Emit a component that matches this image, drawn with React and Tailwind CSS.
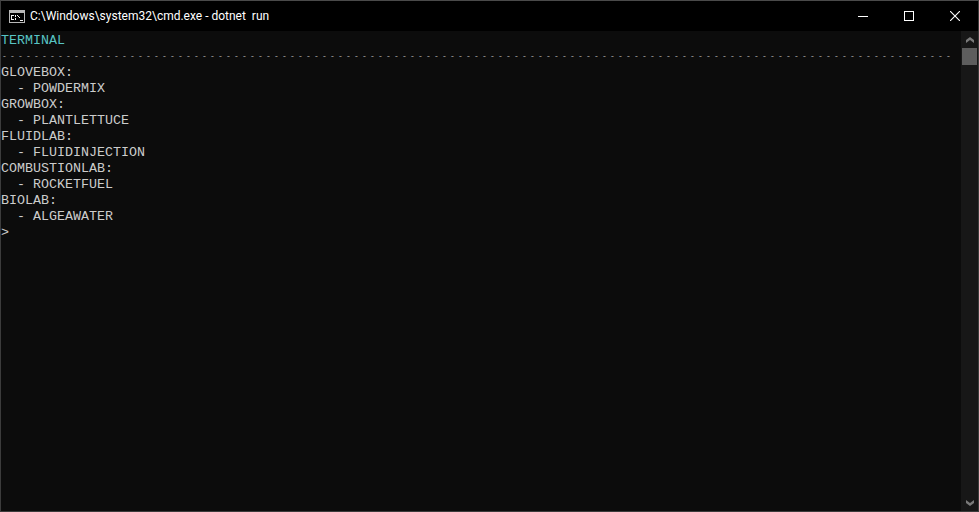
const lines = [
    'GLOVEBOX:',
    '  - POWDERMIX',
    'GROWBOX:',
    '  - PLANTLETTUCE',
    'FLUIDLAB:',
    '  - FLUIDINJECTION',
    'COMBUSTIONLAB:',
    '  - ROCKETFUEL',
    'BIOLAB:',
    '  - ALGEAWATER',
    '>',
];

const CmdIcon = () => (
    <svg width="16" height="13" viewBox="0 0 16 13" shapeRendering="crispEdges">
        <rect x="0" y="0" width="16" height="13" fill="#b8b8b8" />
        <rect x="1" y="3" width="14" height="9" fill="#000" />
        <path d="M2 5h3v1H2zM2 6h1v3H2zM2 9h3v1H2zM6 5h1v2H6zM6 8h1v2H6zM8 5h1v1H8zM9 6h1v1H9zM10 7h1v1H10zM11 10h3v1h-3z" fill="#f0f0f0" />
    </svg>
);

// scrollbar arrows are solid chevrons, not thin strokes
const ScrollArrow = ({ down }) => (
    <svg width="8" height="6" viewBox="0 0 8 6" fill="#7a7a7a">
        <path d={down ? 'M0 0L4 3L8 0V3L4 6L0 3Z' : 'M0 6L4 3L8 6V3L4 0L0 3Z'} />
    </svg>
);

const App = () => {
    return (
        <div className="w-[979px] h-[512px] bg-[#0c0c0c] border border-[#3c3c3c] border-t-[#4a4a4a] flex flex-col overflow-hidden">
            <header className="h-[30px] shrink-0 bg-black flex items-center text-white">
                <div className="w-[29px] pl-[8px] flex items-center shrink-0">
                    <CmdIcon />
                </div>
                <span className="flex-1 whitespace-pre text-[12px] font-['Roboto',sans-serif]">
                    {'C:\\Windows\\system32\\cmd.exe - dotnet  run'}
                </span>
                <div className="flex h-full">
                    <div className="w-[46px] flex items-center justify-center">
                        <div className="w-[10px] h-px bg-white"></div>
                    </div>
                    <div className="w-[46px] flex items-center justify-center">
                        <div className="w-[10px] h-[10px] border border-white"></div>
                    </div>
                    <div className="w-[46px] flex items-center justify-center">
                        <svg width="10" height="10" viewBox="0 0 10 10" stroke="#fff" strokeWidth="1.1">
                            <path d="M0 0L10 10M10 0L0 10" />
                        </svg>
                    </div>
                </div>
            </header>

            <div className="flex-1 flex min-h-0">
                <main className="flex-1 pt-[2px] whitespace-pre text-[13.33px] leading-[16px] text-[#cccccc] font-['Liberation_Mono',monospace]">
                    <div className="text-[#58c4c4]">TERMINAL</div>
                    {/* smaller glyphs with tracking so the rule reads as separate dashes on the 8px grid */}
                    <div className="h-[16px] text-[8px] leading-[14px] tracking-[3.2px] pl-[1px] text-[#c0c0c0]">{'-'.repeat(119)}</div>
                    {lines.map((line, i) => (
                        <div key={i}>{line}</div>
                    ))}
                </main>

                <aside className="w-[17px] shrink-0 bg-[#171717] flex flex-col items-center">
                    <div className="h-[17px] flex items-center justify-center">
                        <ScrollArrow />
                    </div>
                    <div className="w-[15px] h-[17px] bg-[#5d5d5d]"></div>
                    <div className="flex-1"></div>
                    <div className="h-[17px] flex items-center justify-center">
                        <ScrollArrow down />
                    </div>
                </aside>
            </div>
        </div>
    );
};

export default App;
